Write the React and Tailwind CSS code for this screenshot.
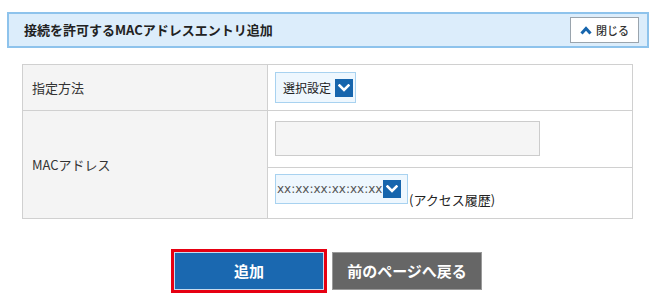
import React from "react";

const font = { fontFamily: '"Noto Sans CJK JP", "Noto Sans", sans-serif' };

function DropIcon() {
  return (
    <span className="flex h-[18px] w-[18px] shrink-0 items-center justify-center bg-[#1665ad]">
      <svg width="12" height="8" viewBox="0 0 12 8">
        <polyline points="1.5,1.5 6,6 10.5,1.5" fill="none" stroke="#fff" strokeWidth="2.6" strokeLinecap="square" />
      </svg>
    </span>
  );
}

export default function App() {
  return (
    <div className="w-[658px] h-[306px] bg-white pt-[12px] text-[#333]" style={font}>
      <div className="mx-[7px] flex h-[36px] w-[642px] items-center justify-between border-2 border-[#8ec3ec] bg-[#dcedfb] pl-[15px] pr-[8px]">
        <span className="text-[13px] font-bold text-[#222]">接続を許可するMACアドレスエントリ追加</span>
        <button className="flex h-[26px] w-[69px] items-center justify-center gap-[4px] border border-[#9aa4ad] bg-white text-[11px] font-medium text-[#333]">
          <svg width="12" height="9" viewBox="0 0 12 9">
            <polyline points="1.5,7.5 6,2.5 10.5,7.5" fill="none" stroke="#1665ad" strokeWidth="3" />
          </svg>
          <span>閉じる</span>
        </button>
      </div>

      <div className="ml-[22px] mt-[16px] w-[611px] border border-[#d0d0d0] text-[13px]">
        <div className="flex h-[46px] border-b border-[#d0d0d0]">
          <div className="flex w-[245px] items-center border-r border-[#d0d0d0] bg-[#f4f4f4] pl-[9px]">指定方法</div>
          <div className="flex flex-1 items-start px-[7px] pt-[7px]">
            <div className="flex h-[31px] w-[81px] items-center gap-[4px] border border-[#a8d2f0] bg-[#eef7fe] pl-[7px] text-[12px] text-[#222]">
              <span>選択設定</span>
              <DropIcon />
            </div>
          </div>
        </div>
        <div className="flex h-[107px]">
          <div className="flex w-[245px] items-center border-r border-[#d0d0d0] bg-[#f4f4f4] pl-[9px]">MACアドレス</div>
          <div className="flex flex-1 flex-col">
            <div className="flex h-[57px] items-start border-b border-[#d0d0d0] px-[7px] pt-[10px]">
              <div className="h-[35px] w-[265px] border border-[#cccccc] bg-[#f5f5f5]"></div>
            </div>
            <div className="flex flex-1 items-start px-[7px] pt-[6px]">
              <div className="flex h-[30px] w-[133px] items-center gap-[1px] overflow-hidden border border-[#a8d2f0] bg-[#eef7fe] pl-[1px] text-[12px] text-[#555]">
                <span className="whitespace-nowrap" style={{ fontFamily: '"DejaVu Sans", sans-serif' }}>xx:xx:xx:xx:xx:xx</span>
                <DropIcon />
              </div>
              <span className="mt-[18px] ml-[1px] text-[13px] leading-[16px] text-[#222]">(アクセス履歴)</span>
            </div>
          </div>
        </div>
      </div>

      <div className="ml-[22px] mt-[30px] flex w-[611px] items-center justify-center gap-[5px] pr-[2px]">
        <div className="border-[3px] border-[#e60012]">
          <button className="flex h-[38px] w-[150px] items-center justify-center border border-[#c6dbef] bg-[#1a68b0] text-[15px] font-bold text-white">
            追加
          </button>
        </div>
        <button className="flex h-[38px] w-[150px] items-center justify-center border border-[#9a9a9a] bg-[#666666] text-[15px] font-bold text-white">
          前のページへ戻る
        </button>
      </div>
    </div>
  );
}
